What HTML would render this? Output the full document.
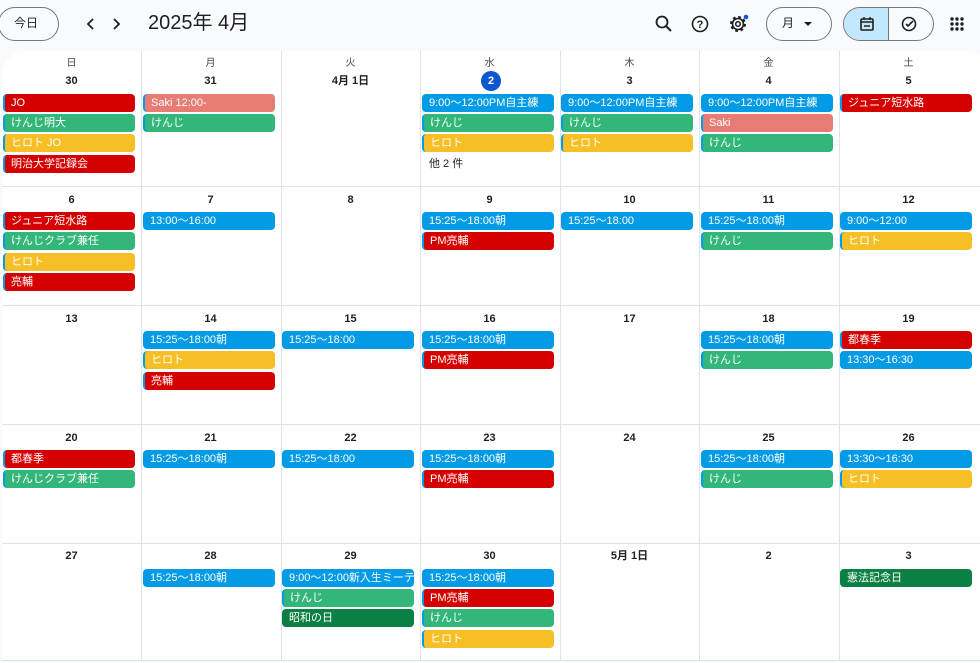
<!DOCTYPE html>
<html><head><meta charset="utf-8"><style>
*{margin:0;padding:0;box-sizing:border-box}
body{width:980px;height:663px;background:#f8fafd;font-family:"Liberation Sans","Noto Sans CJK JP",sans-serif;position:relative;overflow:hidden;color:#1f1f1f;line-height:1.2}
.a{position:absolute}
.grid{position:absolute;left:2px;top:51px;width:990px;height:610px;background:#fff;border-radius:24px 24px 0 0}
.vl{position:absolute;top:51px;height:610px;width:1px;background:#dde3ea}
.hl{position:absolute;left:2px;width:978px;height:1px;background:#dde3ea}
.dow{position:absolute;top:58px;width:139px;text-align:center;font-size:10px;line-height:12px;color:#444746}
.d{position:absolute;width:139px;text-align:center;font-size:11px;line-height:14px;font-weight:bold;color:#1f1f1f}
.e{position:absolute;width:132px;height:18px;border-radius:4px;color:#fff;font-size:11px;line-height:18px;padding-left:7px;white-space:nowrap;overflow:hidden}
.s{border-left:2px solid #039be5;padding-left:6px}
.r{background:#d50000}.g{background:#33b679}.y{background:#f6bf26}.b{background:#039be5}.f{background:#e67c73}.k{background:#0b8043}
.btn{position:absolute;border:1px solid #747775;border-radius:17px}
</style></head><body>
<div class="btn" style="left:-2px;top:7px;width:61px;height:34px"></div>
<div class="a" style="left:14px;top:16px;font-size:12px;line-height:15px">今日</div>
<svg class="a" style="left:83px;top:16px" width="44" height="16" viewBox="0 0 44 16"><path d="M10 3L5 8l5 5M31 3l5 5-5 5" fill="none" stroke="#1f1f1f" stroke-width="1.8"/></svg>
<div class="a" style="left:148px;top:11px;font-size:20px;line-height:24px">2025年 4月</div>
<svg class="a" style="left:654px;top:14px" width="20" height="20" viewBox="0 0 20 20"><circle cx="8" cy="8" r="5.5" fill="none" stroke="#1f1f1f" stroke-width="1.8"/><path d="M12 12l5 5" stroke="#1f1f1f" stroke-width="2"/></svg>
<svg class="a" style="left:690px;top:14px" width="20" height="20" viewBox="0 0 20 20"><circle cx="10" cy="10" r="7.5" fill="none" stroke="#1f1f1f" stroke-width="1.6"/><text x="10" y="14" font-size="11" text-anchor="middle" font-family="Liberation Sans" font-weight="bold" fill="#1f1f1f">?</text></svg>
<svg class="a" style="left:728px;top:13px" width="22" height="22" viewBox="0 0 22 22"><circle cx="10" cy="11" r="6.5" fill="none" stroke="#1f1f1f" stroke-width="3" stroke-dasharray="2.6 2.5"/><circle cx="10" cy="11" r="5.5" fill="none" stroke="#1f1f1f" stroke-width="1.6"/><circle cx="10" cy="11" r="2.3" fill="none" stroke="#1f1f1f" stroke-width="1.5"/><circle cx="18" cy="4" r="2.3" fill="#0b57d0"/></svg>
<div class="btn" style="left:766px;top:7px;width:66px;height:34px"></div>
<div class="a" style="left:782px;top:16px;font-size:12px;line-height:15px">月</div>
<div class="a" style="left:804px;top:22px;border:4px solid transparent;border-top:4px solid #1f1f1f"></div>
<div class="btn" style="left:843px;top:7px;width:91px;height:34px;overflow:hidden"><div style="width:45px;height:34px;background:#c2e7ff;border-right:1px solid #747775"></div></div>
<svg class="a" style="left:859px;top:16px" width="16" height="16" viewBox="0 0 16 16"><rect x="2" y="3" width="12" height="11" rx="1" fill="none" stroke="#1f1f1f" stroke-width="1.6"/><path d="M2 6h12M5 1v3M11 1v3M5 10h6" stroke="#1f1f1f" stroke-width="1.4"/></svg>
<svg class="a" style="left:900px;top:15px" width="18" height="18" viewBox="0 0 18 18"><circle cx="9" cy="9" r="6.5" fill="none" stroke="#1f1f1f" stroke-width="1.6"/><path d="M6 9l2 2 5-5" fill="none" stroke="#1f1f1f" stroke-width="1.6"/></svg>
<svg class="a" style="left:949px;top:16px" width="16" height="16" viewBox="0 0 16 16" fill="#1f1f1f"><circle cx="3" cy="3" r="1.7"/><circle cx="8" cy="3" r="1.7"/><circle cx="13" cy="3" r="1.7"/><circle cx="3" cy="8" r="1.7"/><circle cx="8" cy="8" r="1.7"/><circle cx="13" cy="8" r="1.7"/><circle cx="3" cy="13" r="1.7"/><circle cx="8" cy="13" r="1.7"/><circle cx="13" cy="13" r="1.7"/></svg>

<div class="grid"></div>
<div class="vl" style="left:141px"></div><div class="vl" style="left:281px"></div><div class="vl" style="left:420px"></div><div class="vl" style="left:560px"></div><div class="vl" style="left:699px"></div><div class="vl" style="left:839px"></div>
<div class="hl" style="top:186px"></div><div class="hl" style="top:305px"></div><div class="hl" style="top:424px"></div><div class="hl" style="top:543px"></div><div class="hl" style="top:660px"></div>

<div class="dow" style="left:2px">日</div><div class="dow" style="left:141px">月</div><div class="dow" style="left:281px">火</div><div class="dow" style="left:420px">水</div><div class="dow" style="left:560px">木</div><div class="dow" style="left:699px">金</div><div class="dow" style="left:839px">土</div>

<div class="a" style="left:481px;top:71px;width:20px;height:20px;border-radius:50%;background:#0b57d0;color:#fff;font-size:11px;font-weight:bold;text-align:center;line-height:20px">2</div>
<div class="d" style="left:2px;top:74px">30</div><div class="d" style="left:141px;top:74px">31</div><div class="d" style="left:281px;top:74px">4月 1日</div><div class="d" style="left:560px;top:74px">3</div><div class="d" style="left:699px;top:74px">4</div><div class="d" style="left:839px;top:74px">5</div>
<div class="d" style="left:2px;top:193px">6</div><div class="d" style="left:141px;top:193px">7</div><div class="d" style="left:281px;top:193px">8</div><div class="d" style="left:420px;top:193px">9</div><div class="d" style="left:560px;top:193px">10</div><div class="d" style="left:699px;top:193px">11</div><div class="d" style="left:839px;top:193px">12</div>
<div class="d" style="left:2px;top:312px">13</div><div class="d" style="left:141px;top:312px">14</div><div class="d" style="left:281px;top:312px">15</div><div class="d" style="left:420px;top:312px">16</div><div class="d" style="left:560px;top:312px">17</div><div class="d" style="left:699px;top:312px">18</div><div class="d" style="left:839px;top:312px">19</div>
<div class="d" style="left:2px;top:431px">20</div><div class="d" style="left:141px;top:431px">21</div><div class="d" style="left:281px;top:431px">22</div><div class="d" style="left:420px;top:431px">23</div><div class="d" style="left:560px;top:431px">24</div><div class="d" style="left:699px;top:431px">25</div><div class="d" style="left:839px;top:431px">26</div>
<div class="d" style="left:2px;top:549px">27</div><div class="d" style="left:141px;top:549px">28</div><div class="d" style="left:281px;top:549px">29</div><div class="d" style="left:420px;top:549px">30</div><div class="d" style="left:560px;top:549px">5月 1日</div><div class="d" style="left:699px;top:549px">2</div><div class="d" style="left:839px;top:549px">3</div>

<!-- row1 -->
<div class="e r s" style="left:3px;top:94px">JO</div>
<div class="e g s" style="left:3px;top:114px">けんじ明大</div>
<div class="e y s" style="left:3px;top:134px">ヒロト JO</div>
<div class="e r s" style="left:3px;top:155px">明治大学記録会</div>
<div class="e f s" style="left:143px;top:94px">Saki 12:00-</div>
<div class="e g s" style="left:143px;top:114px">けんじ</div>
<div class="e b" style="left:422px;top:94px">9:00〜12:00PM自主練</div>
<div class="e g s" style="left:422px;top:114px">けんじ</div>
<div class="e y s" style="left:422px;top:134px">ヒロト</div>
<div class="a" style="left:429px;top:157px;font-size:11px;line-height:14px;color:#1f1f1f">他 2 件</div>
<div class="e b" style="left:561px;top:94px">9:00〜12:00PM自主練</div>
<div class="e g s" style="left:561px;top:114px">けんじ</div>
<div class="e y s" style="left:561px;top:134px">ヒロト</div>
<div class="e b" style="left:701px;top:94px">9:00〜12:00PM自主練</div>
<div class="e f s" style="left:701px;top:114px">Saki</div>
<div class="e g s" style="left:701px;top:134px">けんじ</div>
<div class="e r s" style="left:840px;top:94px">ジュニア短水路</div>
<!-- row2 -->
<div class="e r s" style="left:3px;top:212px">ジュニア短水路</div>
<div class="e g s" style="left:3px;top:232px">けんじクラブ兼任</div>
<div class="e y s" style="left:3px;top:253px">ヒロト</div>
<div class="e r s" style="left:3px;top:273px">亮輔</div>
<div class="e b" style="left:143px;top:212px">13:00〜16:00</div>
<div class="e b" style="left:422px;top:212px">15:25〜18:00朝</div>
<div class="e r s" style="left:422px;top:232px">PM亮輔</div>
<div class="e b" style="left:561px;top:212px">15:25〜18:00</div>
<div class="e b" style="left:701px;top:212px">15:25〜18:00朝</div>
<div class="e g s" style="left:701px;top:232px">けんじ</div>
<div class="e b" style="left:840px;top:212px">9:00〜12:00</div>
<div class="e y s" style="left:840px;top:232px">ヒロト</div>
<!-- row3 -->
<div class="e b" style="left:143px;top:331px">15:25〜18:00朝</div>
<div class="e y s" style="left:143px;top:351px">ヒロト</div>
<div class="e r s" style="left:143px;top:372px">亮輔</div>
<div class="e b" style="left:282px;top:331px">15:25〜18:00</div>
<div class="e b" style="left:422px;top:331px">15:25〜18:00朝</div>
<div class="e r s" style="left:422px;top:351px">PM亮輔</div>
<div class="e b" style="left:701px;top:331px">15:25〜18:00朝</div>
<div class="e g s" style="left:701px;top:351px">けんじ</div>
<div class="e r s" style="left:840px;top:331px">都春季</div>
<div class="e b" style="left:840px;top:351px">13:30〜16:30</div>
<!-- row4 -->
<div class="e r s" style="left:3px;top:450px">都春季</div>
<div class="e g s" style="left:3px;top:470px">けんじクラブ兼任</div>
<div class="e b" style="left:143px;top:450px">15:25〜18:00朝</div>
<div class="e b" style="left:282px;top:450px">15:25〜18:00</div>
<div class="e b" style="left:422px;top:450px">15:25〜18:00朝</div>
<div class="e r s" style="left:422px;top:470px">PM亮輔</div>
<div class="e b" style="left:701px;top:450px">15:25〜18:00朝</div>
<div class="e g s" style="left:701px;top:470px">けんじ</div>
<div class="e b" style="left:840px;top:450px">13:30〜16:30</div>
<div class="e y s" style="left:840px;top:470px">ヒロト</div>
<!-- row5 -->
<div class="e b" style="left:143px;top:569px">15:25〜18:00朝</div>
<div class="e b" style="left:282px;top:569px">9:00〜12:00新入生ミーティング</div>
<div class="e g s" style="left:282px;top:589px">けんじ</div>
<div class="e k" style="left:282px;top:609px">昭和の日</div>
<div class="e b" style="left:422px;top:569px">15:25〜18:00朝</div>
<div class="e r s" style="left:422px;top:589px">PM亮輔</div>
<div class="e g s" style="left:422px;top:609px">けんじ</div>
<div class="e y s" style="left:422px;top:630px">ヒロト</div>
<div class="e k" style="left:840px;top:569px">憲法記念日</div>
</body></html>
